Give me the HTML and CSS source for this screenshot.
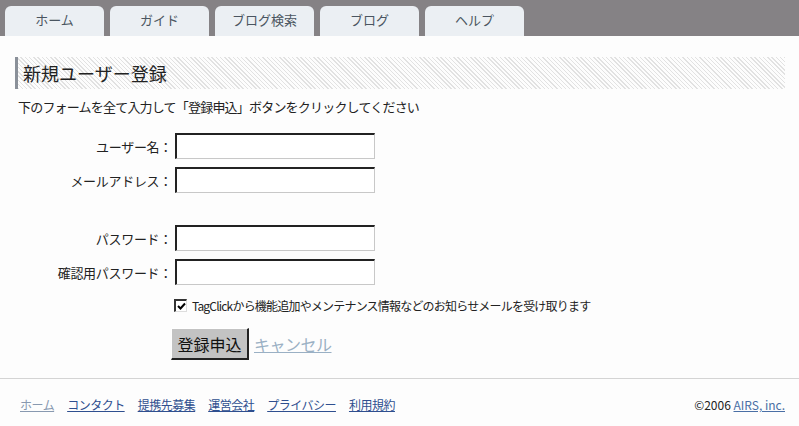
FILE: index.html
```html
<!DOCTYPE html>
<html lang="ja">
<head>
  <meta charset="UTF-8">
  <title>新規ユーザー登録</title>
  <link rel="stylesheet" href="styles.css">
</head>
<body>
  <div class="tab-bar">
    <a class="tab" href="#">ホーム</a>
    <a class="tab" href="#">ガイド</a>
    <a class="tab" href="#">ブログ検索</a>
    <a class="tab" href="#">ブログ</a>
    <a class="tab" href="#">ヘルプ</a>
  </div>

  <div class="content">
    <h1 class="page-title">新規ユーザー登録</h1>
    <p class="lead">下のフォームを全て入力して「登録申込」ボタンをクリックしてください</p>

    <form class="signup-form">
      <div class="form-row">
        <label class="form-label">ユーザー名：</label>
        <input class="form-input" type="text">
      </div>
      <div class="form-row">
        <label class="form-label">メールアドレス：</label>
        <input class="form-input" type="text">
      </div>
      <div class="form-row spaced">
        <label class="form-label">パスワード：</label>
        <input class="form-input" type="password">
      </div>
      <div class="form-row">
        <label class="form-label">確認用パスワード：</label>
        <input class="form-input" type="password">
      </div>
      <div class="form-row check-row">
        <span class="check-box">
          <svg width="9" height="9" viewBox="0 0 9 9"><path d="M1 4 L3.5 6.5 L8 1.5" fill="none" stroke="#000" stroke-width="2"/></svg>
        </span>
        <span class="check-text">TagClickから機能追加やメンテナンス情報などのお知らせメールを受け取ります</span>
      </div>
      <div class="form-row action-row">
        <button class="submit-button" type="button">登録申込</button>
        <a class="cancel-link" href="#">キャンセル</a>
      </div>
    </form>
  </div>

  <div class="footer">
    <div class="footer-links">
      <a class="visited" href="#">ホーム</a>
      <a href="#">コンタクト</a>
      <a href="#">提携先募集</a>
      <a href="#">運営会社</a>
      <a href="#">プライバシー</a>
      <a href="#">利用規約</a>
    </div>
    <div class="copyright">©2006 <a href="#">AIRS, inc.</a></div>
  </div>
</body>
</html>
```

FILE: styles.css
```css
body {
  font-family: "Noto Sans CJK JP", "Liberation Sans", sans-serif;
  font-size: 13px;
  color: #222;
  background-color: #fdfdfd;
  margin: 0;
}

.tab-bar {
  display: flex;
  gap: 6px;
  background-color: #858285;
  padding: 6px 0 0 5px;
  height: 30px;
}

.tab {
  width: 99px;
  height: 30px;
  line-height: 28px;
  text-align: center;
  background-color: #ebeff3;
  border-radius: 6px 6px 0 0;
  color: #4a5560;
  text-decoration: none;
  font-size: 13px;
}

.content {
  padding: 21px 14px 0 15px;
}

.page-title {
  margin: 0;
  height: 32px;
  line-height: 32px;
  padding-left: 5px;
  border-left: 3px solid #8a9099;
  font-size: 18px;
  font-weight: normal;
  color: #222;
  background: repeating-linear-gradient(45deg, #e2e2e2 0 1px, #fdfdfd 1px 3px);
}

.lead {
  margin: 10px 0 0 3px;
  line-height: 16px;
  letter-spacing: -0.8px;
}

.signup-form {
  margin-top: 18px;
}

.form-row {
  display: flex;
  align-items: center;
  margin-bottom: 8px;
}

.form-row.spaced {
  margin-top: 32px;
}

.form-label {
  width: 157px;
  text-align: right;
  padding-right: 3px;
  letter-spacing: -0.3px;
}

.form-input {
  box-sizing: border-box;
  width: 200px;
  height: 26px;
  margin: 0;
  border-top: 2px solid #222;
  border-left: 2px solid #222;
  border-right: 1px solid #c8c8c8;
  border-bottom: 1px solid #c8c8c8;
  background: #fff;
}

.check-row {
  margin: 12px 0 0 159px;
  font-size: 12px;
  letter-spacing: -0.8px;
}

.check-box {
  box-sizing: border-box;
  width: 13px;
  height: 13px;
  border-top: 2px solid #333;
  border-left: 2px solid #333;
  border-right: 1px solid #ddd;
  border-bottom: 1px solid #ddd;
  background: #fff;
  display: flex;
  align-items: center;
  justify-content: center;
  margin-right: 5px;
}

.action-row {
  margin: 14px 0 0 156px;
}

.submit-button {
  font-family: inherit;
  font-size: 16px;
  width: 78px;
  height: 32px;
  padding: 0;
  background-color: #c3c3c3;
  border-top: 1px solid #fff;
  border-left: 1px solid #fff;
  border-right: 2px solid #222;
  border-bottom: 2px solid #222;
  color: #111;
}

.cancel-link {
  font-size: 16px;
  color: #9ab0c4;
  margin-left: 5px;
  letter-spacing: -0.5px;
}

.footer {
  margin-top: 18px;
  border-top: 1px solid #d4d4d4;
  display: flex;
  justify-content: space-between;
  padding: 17px 14px 0 20px;
  font-size: 12px;
}

.footer-links {
  display: flex;
  gap: 13px;
  letter-spacing: -0.5px;
}

.footer-links a {
  color: #2f4f8f;
}

.footer-links a.visited {
  color: #8899b0;
}

.copyright {
  color: #222;
}

.copyright a {
  color: #4a6fa5;
}
```
